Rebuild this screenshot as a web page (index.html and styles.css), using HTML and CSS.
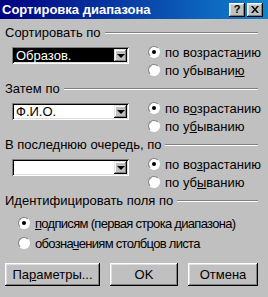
FILE: index.html
```html
<!DOCTYPE html>
<html lang="ru">
  <head>
    <meta charset="UTF-8" />
    <title>Сортировка диапазона</title>
    <link rel="stylesheet" href="styles.css">
  </head>
  <body>
    <div class="dialog">
      <div class="titlebar">
        <span class="title">Сортировка диапазона</span>
        <div class="title-buttons">
          <span class="title-btn">?</span>
          <span class="title-btn">
            <svg width="8" height="7" viewBox="0 0 8 7">
              <path d="M0 0h2l2 2.5 2-2.5h2l-3 3.5 3 3.5h-2l-2-2.5-2 2.5h-2l3-3.5z" fill="#000"/>
            </svg>
          </span>
        </div>
      </div>

      <div class="content">
        <div class="group">
          <div class="legend"><span>Сортировать по</span><i class="rule"></i></div>
          <div class="group-row">
            <div class="combo selected">
              <span class="combo-text">Образов.</span>
              <span class="combo-btn"><i class="arrow"></i></span>
            </div>
            <div class="radios">
              <label class="radio checked"><i class="dot"></i><span>по возраста<u>н</u>ию</span></label>
              <label class="radio"><i class="dot"></i><span>по убывани<u>ю</u></span></label>
            </div>
          </div>
        </div>

        <div class="group">
          <div class="legend"><span>Затем по</span><i class="rule"></i></div>
          <div class="group-row">
            <div class="combo">
              <span class="combo-text">Ф.И.О.</span>
              <span class="combo-btn"><i class="arrow"></i></span>
            </div>
            <div class="radios">
              <label class="radio checked"><i class="dot"></i><span>по в<u>о</u>зрастанию</span></label>
              <label class="radio"><i class="dot"></i><span>по у<u>б</u>ыванию</span></label>
            </div>
          </div>
        </div>

        <div class="group">
          <div class="legend"><span>В последнюю очередь, по</span><i class="rule"></i></div>
          <div class="group-row">
            <div class="combo">
              <span class="combo-text"></span>
              <span class="combo-btn"><i class="arrow"></i></span>
            </div>
            <div class="radios">
              <label class="radio checked"><i class="dot"></i><span>по во<u>з</u>растанию</span></label>
              <label class="radio"><i class="dot"></i><span>по уб<u>ы</u>ванию</span></label>
            </div>
          </div>
        </div>

        <div class="group last">
          <div class="legend"><span>Идентифицировать поля по</span><i class="rule"></i></div>
          <div class="id-radios">
            <label class="radio checked"><i class="dot"></i><span><u>п</u>одписям (первая строка диапазона)</span></label>
            <label class="radio"><i class="dot"></i><span>обозна<u>ч</u>ениям столбцов листа</span></label>
          </div>
        </div>

        <div class="buttons">
          <button class="btn btn-params">Па<u>р</u>аметры...</button>
          <button class="btn btn-ok">OK</button>
          <button class="btn btn-cancel">Отмена</button>
        </div>
      </div>
    </div>
  </body>
</html>
```

FILE: styles.css
```css
* {
  margin: 0;
  padding: 0;
  box-sizing: border-box;
}

body {
  background: #c0c0c0;
  font-family: "Liberation Sans", Arial, sans-serif;
  font-size: 13px;
  color: #000;
  white-space: nowrap;
}

.dialog {
  width: 268px;
  height: 297px;
  overflow: hidden;
}

.titlebar {
  height: 19px;
  display: flex;
  align-items: center;
  justify-content: space-between;
  padding: 0 5px 0 2px;
  background: linear-gradient(to right, #000080, #1084d0);
}

.title {
  color: #fff;
  font-weight: bold;
  font-size: 13px;
}

.title-buttons {
  display: flex;
  gap: 2px;
}

.title-btn {
  width: 16px;
  height: 14px;
  display: flex;
  align-items: center;
  justify-content: center;
  background: #c0c0c0;
  font-weight: bold;
  font-size: 11px;
  line-height: 1;
  box-shadow: inset -1px -1px #000, inset 1px 1px #fff, inset -2px -2px #808080, inset 2px 2px #dfdfdf;
}

.content {
  padding: 7px 10px 0 5px;
}

.group {
  margin-bottom: 3px;
}

.legend {
  height: 14px;
  line-height: 14px;
  display: flex;
  align-items: center;
}

.rule {
  flex: 1;
  margin-left: 4px;
  border-top: 1px solid #808080;
  border-bottom: 1px solid #fff;
}

.group-row {
  display: flex;
  margin-top: 3px;
}

.combo {
  flex: none;
  width: 117px;
  height: 17px;
  margin: 4px 0 0 7px;
  display: flex;
  background: #fff;
  padding: 2px;
  box-shadow: inset 1px 1px #808080, inset -1px -1px #fff, inset 2px 2px #000, inset -2px -2px #dfdfdf;
}

.combo-text {
  flex: 1;
  line-height: 13px;
  padding-left: 2px;
}

.combo.selected .combo-text {
  background: #000;
  color: #fff;
}

.combo-btn {
  width: 13px;
  display: flex;
  align-items: center;
  justify-content: center;
  background: #c0c0c0;
  box-shadow: inset -1px -1px #000, inset 1px 1px #dfdfdf, inset -2px -2px #808080, inset 2px 2px #fff;
}

.arrow {
  width: 0;
  height: 0;
  border-left: 4px solid transparent;
  border-right: 4px solid transparent;
  border-top: 4px solid #000;
  margin-top: 1px;
}

.radios {
  flex: none;
  margin-left: 19px;
  display: flex;
  flex-direction: column;
}

.radio {
  height: 18px;
  display: flex;
  align-items: center;
  gap: 5px;
}

.dot {
  flex: none;
  width: 12px;
  height: 12px;
  border-radius: 50%;
  background: #fff;
  border: 1px solid;
  border-color: #808080 #fff #fff #808080;
  display: flex;
  align-items: center;
  justify-content: center;
}

.radio.checked .dot::after {
  content: "";
  width: 4px;
  height: 4px;
  border-radius: 50%;
  background: #000;
}

.id-radios {
  margin: 5px 0 0 13px;
}

.id-radios .radio {
  height: 20px;
}

.id-radios span {
  letter-spacing: -0.7px;
}

.buttons {
  display: flex;
  gap: 10px;
  margin-top: 10px;
}

.btn {
  height: 23px;
  font-family: inherit;
  font-size: 13px;
  background: #c0c0c0;
  border: none;
  box-shadow: inset -1px -1px #000, inset 1px 1px #fff, inset -2px -2px #808080, inset 2px 2px #dfdfdf;
}

.btn-params {
  width: 95px;
}

.btn-ok {
  width: 68px;
}

.btn-cancel {
  width: 70px;
}
```
